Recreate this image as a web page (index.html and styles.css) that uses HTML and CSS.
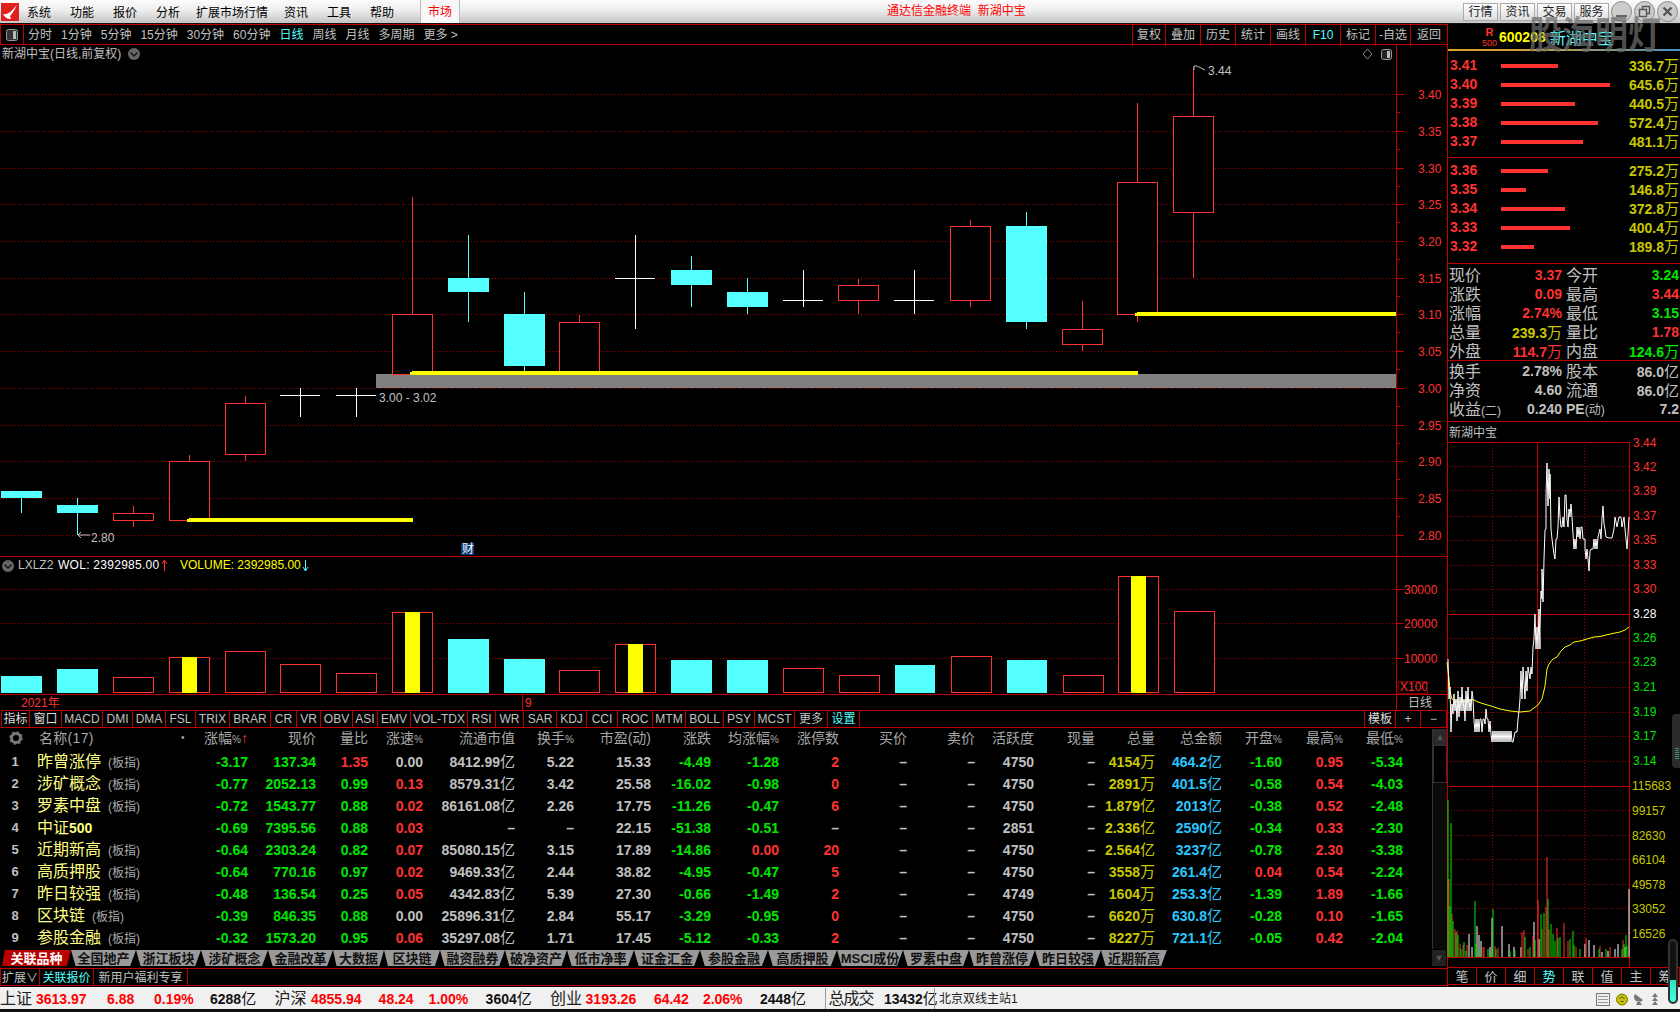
FILE: index.html
```html
<!DOCTYPE html>
<html lang="zh">
<head>
<meta charset="utf-8">
<title>通达信金融终端 新湖中宝</title>
<link rel="stylesheet" href="styles.css">
</head>
<body>
<div class="app">
  <header class="titlebar">
    <svg class="logo" viewBox="0 0 18 18"><rect width="18" height="18" fill="#e0201c"/><path d="M2 11 C6 12 9 10 16 2 C13 8 11 11 9 13 L10 16 C7 16 4 15 2 11Z" fill="#fff"/></svg>
    <nav class="menu">
      <span>系统</span><span>功能</span><span>报价</span><span>分析</span><span class="wide">扩展市场行情</span><span>资讯</span><span>工具</span><span>帮助</span>
    </nav>
    <span class="market">市场</span>
    <span class="apptitle">通达信金融终端&nbsp;&nbsp;新湖中宝</span>
    <div class="winbtns">
      <span class="wbtn">行情</span><span class="wbtn">资讯</span><span class="wbtn">交易</span><span class="wbtn">服务</span>
      <svg class="wround" viewBox="0 0 21 21"><circle cx="10.5" cy="10.5" r="10" fill="#ccc" stroke="#888"/><rect x="5" y="14" width="11" height="2" fill="#666"/></svg>
      <svg class="wround" viewBox="0 0 21 21"><circle cx="10.5" cy="10.5" r="10" fill="#ccc" stroke="#888"/><path d="M5.5 8.5H12.5V15.5H5.5ZM8.5 8V5.5H15.5V12.5H13" fill="none" stroke="#555" stroke-width="1.4"/></svg>
      <svg class="wround" viewBox="0 0 21 21"><circle cx="10.5" cy="10.5" r="10" fill="#ccc" stroke="#888"/><path d="M6.5 6.5L14.5 14.5M14.5 6.5L6.5 14.5" stroke="#555" stroke-width="2.4"/></svg>
    </div>
  </header>

  <main class="workspace">
    <section class="left">
      <div class="toolbar">
        <span class="panelbtn"><svg width="12" height="12" viewBox="0 0 12 12"><rect x=".5" y=".5" width="11" height="11" rx="2" fill="#333" stroke="#999"/><rect x="7" y="2" width="3" height="8" fill="#bbb"/></svg></span>
        <div class="periods">
          <span>分时</span><span>1分钟</span><span>5分钟</span><span>15分钟</span><span>30分钟</span><span>60分钟</span><span class="on">日线</span><span>周线</span><span>月线</span><span>多周期</span><span>更多 &gt;</span>
        </div>
        <div class="tools">
          <span>复权</span><span>叠加</span><span>历史</span><span>统计</span><span>画线</span><span class="on">F10</span><span>标记</span><span>-自选</span><span>返回</span>
        </div>
      </div>

      <svg class="chart" viewBox="0 45 1447 665" width="1447" height="665">
        <g class="grid">
          <path d="M0 94.5H1396M0 131.5H1396M0 168.5H1396M0 204.5H1396M0 241.5H1396M0 278.5H1396M0 314.5H1396M0 351.5H1396M0 388.5H1396M0 425.5H1396M0 461.5H1396M0 498.5H1396M0 535.5H1396"/>
          <path d="M0 589.5H1396M0 623.5H1396M0 658.5H1396"/>
        </g>
        <rect class="band" x="376" y="374" width="1020" height="14"/>

        <g class="wick-c">
          <path d="M21.5 498V513M77.5 498V535M468.5 235V322M524.5 292V371M691.5 256V307M747.5 278V314M1026.5 212V329"/>
        </g>
        <g class="wick-r">
          <path d="M133.5 506V527M189.5 455V462M245.5 396V461M412.5 197V315M579.5 315V323M858.5 279V314M970.5 220V307M1082.5 301V351M1137.5 103V322M1193.5 67V278"/>
        </g>
        <g class="cross">
          <path d="M280 395.5H320M300.5 388V417M336 395.5H376M356.5 388V417M615 278.5H655M635.5 235V329M783 300.5H823M803.5 270V307M894 300.5H934M914.5 270V314"/>
        </g>
        <g class="up">
          <rect x="113.5" y="513.5" width="40" height="7"/><rect x="169.5" y="461.5" width="40" height="59"/><rect x="225.5" y="403.5" width="40" height="51"/><rect x="392.5" y="314.5" width="40" height="60"/><rect x="559.5" y="322.5" width="40" height="50"/><rect x="838.5" y="285.5" width="40" height="15"/><rect x="950.5" y="226.5" width="40" height="74"/><rect x="1062.5" y="329.5" width="40" height="15"/><rect x="1117.5" y="182.5" width="40" height="132"/><rect x="1173.5" y="116.5" width="40" height="96"/>
        </g>
        <g class="down">
          <rect x="1" y="491" width="41" height="7"/><rect x="57" y="505" width="41" height="8"/><rect x="448" y="278" width="41" height="14"/><rect x="504" y="314" width="41" height="52"/><rect x="671" y="270" width="41" height="15"/><rect x="727" y="292" width="41" height="15"/><rect x="1006" y="226" width="41" height="96"/>
        </g>
        <g class="hl">
          <rect x="187" y="519" width="226" height="3"/><rect x="189" y="518" width="224" height="3"/><rect x="410" y="372" width="728" height="3"/><rect x="412" y="371" width="726" height="3"/><rect x="1135" y="313" width="261" height="3"/><rect x="1137" y="312" width="259" height="3"/>
        </g>
        <path class="note-line" d="M78 535H90M78 535L81 532M78 535L81 538M1194 70V66H1197L1205 70"/>
        <text class="t12 gray" x="2" y="58">新湖中宝(日线,前复权)</text>
        <circle class="chev" cx="134" cy="54" r="6"/><path class="chev-m" d="M130.5 52.5L134 56L137.5 52.5"/>
        <path class="diamond" d="M1367.5 49L1372 54L1367.5 59L1363 54Z"/>
        <rect class="btnic" x="1381.5" y="49.5" width="10" height="10" rx="2"/><rect class="btnic2" x="1387" y="51" width="3" height="7"/>
        <text class="t12 gray" x="1208" y="75">3.44</text>
        <text class="t12 gray" x="379" y="402">3.00 - 3.02</text>
        <text class="t12 gray" x="91" y="542">2.80</text>
        <rect class="cai" x="461" y="543" width="13" height="12"/><text class="t12 white" x="462" y="553">财</text>

        <g class="axis">
          <path d="M1396.5 45V710M0 556.5H1447M0 694.5H1447M522.5 694V710"/>
          <path d="M1396 94.5H1404M1396 131.5H1404M1396 168.5H1404M1396 204.5H1404M1396 241.5H1404M1396 278.5H1404M1396 314.5H1404M1396 351.5H1404M1396 388.5H1404M1396 425.5H1404M1396 461.5H1404M1396 498.5H1404M1396 535.5H1404M1396 112.5H1400M1396 149.5H1400M1396 186.5H1400M1396 222.5H1400M1396 259.5H1400M1396 296.5H1400M1396 332.5H1400M1396 369.5H1400M1396 406.5H1400M1396 443.5H1400M1396 479.5H1400M1396 516.5H1400M1396 589.5H1404M1396 623.5H1404M1396 658.5H1404"/>
        </g>
        <g class="ax-t">
          <text x="1418" y="99">3.40</text><text x="1418" y="136">3.35</text><text x="1418" y="173">3.30</text><text x="1418" y="209">3.25</text><text x="1418" y="246">3.20</text><text x="1418" y="283">3.15</text><text x="1418" y="319">3.10</text><text x="1418" y="356">3.05</text><text x="1418" y="393">3.00</text><text x="1418" y="430">2.95</text><text x="1418" y="466">2.90</text><text x="1418" y="503">2.85</text><text x="1418" y="540">2.80</text>
          <text x="1404" y="594">30000</text><text x="1404" y="628">20000</text><text x="1404" y="663">10000</text>
          <text x="1400" y="691">X100</text>
          <text x="21" y="707">2021年</text><text x="525" y="707">9</text>
        </g>
        <rect class="x100" x="1398.5" y="681.5" width="29" height="12"/>
        <text class="t12 gray" x="1408" y="707">日线</text>
        <circle class="chev" cx="8" cy="566" r="6"/><path class="chev-m" d="M4.5 564.5L8 568L11.5 564.5"/>
        <text class="t12 gray" x="18" y="569">LXLZ2</text>
        <text class="t12 white wol" x="58" y="569">WOL: 2392985.00</text>
        <path class="arr-r" d="M164.5 571V561M162 564L164.5 560L167 564"/>
        <text class="t12 yel" x="180" y="569">VOLUME: 2392985.00</text>
        <path class="arr-c" d="M305.5 560V570M303 567L305.5 571L308 567"/>

        <g class="up">
          <rect x="113.5" y="677.5" width="40" height="15"/><rect x="169.5" y="657.5" width="40" height="35"/><rect x="225.5" y="651.5" width="40" height="41"/><rect x="280.5" y="664.5" width="40" height="28"/><rect x="336.5" y="673.5" width="40" height="19"/><rect x="392.5" y="612.5" width="40" height="80"/><rect x="559.5" y="670.5" width="40" height="22"/><rect x="615.5" y="644.5" width="40" height="48"/><rect x="783.5" y="668.5" width="40" height="24"/><rect x="839.5" y="675.5" width="40" height="17"/><rect x="951.5" y="656.5" width="40" height="36"/><rect x="1063.5" y="675.5" width="40" height="17"/><rect x="1118.5" y="576.5" width="40" height="116"/><rect x="1174.5" y="611.5" width="40" height="81"/>
        </g>
        <g class="down">
          <rect x="1" y="676" width="41" height="17"/><rect x="57" y="669" width="41" height="24"/><rect x="448" y="639" width="41" height="54"/><rect x="504" y="659" width="41" height="34"/><rect x="671" y="660" width="41" height="33"/><rect x="727" y="660" width="41" height="33"/><rect x="895" y="665" width="40" height="28"/><rect x="1007" y="660" width="40" height="33"/>
        </g>
        <g class="hl">
          <rect x="182" y="657" width="15" height="36"/><rect x="405" y="612" width="15" height="81"/><rect x="628" y="644" width="15" height="49"/><rect x="1131" y="576" width="15" height="117"/>
        </g>
      </svg>

      <div class="indtabs">
        <span class="hi">指标</span><span class="hi">窗口</span><span>MACD</span><span>DMI</span><span>DMA</span><span>FSL</span><span>TRIX</span><span>BRAR</span><span>CR</span><span>VR</span><span>OBV</span><span>ASI</span><span>EMV</span><span>VOL-TDX</span><span>RSI</span><span>WR</span><span>SAR</span><span>KDJ</span><span>CCI</span><span>ROC</span><span>MTM</span><span>BOLL</span><span>PSY</span><span>MCST</span><span>更多</span><span class="on">设置</span><em></em><span class="hi">模板</span><span>+</span><span>−</span>
      </div>

      <div class="quotes">
        <div class="trow thead">
          <span class="idx"><svg width="14" height="14" viewBox="0 0 14 14"><circle cx="7" cy="7" r="4.5" fill="none" stroke="#777" stroke-width="3"/><circle cx="7" cy="7" r="6" fill="none" stroke="#777" stroke-width="1.6" stroke-dasharray="2.2 2.5"/></svg></span>
          <span class="nmh">名称(17)<u>•</u></span><span>涨幅<small>%</small><i class="sortup">↑</i></span><span>现价</span><span>量比</span><span>涨速<small>%</small></span><span>流通市值</span><span>换手<small>%</small></span><span>市盈(动)</span><span>涨跌</span><span>均涨幅<small>%</small></span><span>涨停数</span><span>买价</span><span>卖价</span><span>活跃度</span><span>现量</span><span>总量</span><span>总金额</span><span>开盘<small>%</small></span><span>最高<small>%</small></span><span>最低<small>%</small></span>
        </div>
        <div class="trow"><span class="idx">1</span><span class="nm">昨曾涨停<small>(板指)</small></span><b class="g">-3.17</b><b class="g">137.34</b><b class="r">1.35</b><b>0.00</b><b>8412.99<i>亿</i></b><b>5.22</b><b>15.33</b><b class="g">-4.49</b><b class="g">-1.28</b><b class="r">2</b><b>–</b><b>–</b><b>4750</b><b>–</b><b class="y">4154<i>万</i></b><b class="c">464.2<i>亿</i></b><b class="g">-1.60</b><b class="r">0.95</b><b class="g">-5.34</b></div>
        <div class="trow"><span class="idx">2</span><span class="nm">涉矿概念<small>(板指)</small></span><b class="g">-0.77</b><b class="g">2052.13</b><b class="g">0.99</b><b class="r">0.13</b><b>8579.31<i>亿</i></b><b>3.42</b><b>25.58</b><b class="g">-16.02</b><b class="g">-0.98</b><b class="r">0</b><b>–</b><b>–</b><b>4750</b><b>–</b><b class="y">2891<i>万</i></b><b class="c">401.5<i>亿</i></b><b class="g">-0.58</b><b class="r">0.54</b><b class="g">-4.03</b></div>
        <div class="trow"><span class="idx">3</span><span class="nm">罗素中盘<small>(板指)</small></span><b class="g">-0.72</b><b class="g">1543.77</b><b class="g">0.88</b><b class="r">0.02</b><b>86161.08<i>亿</i></b><b>2.26</b><b>17.75</b><b class="g">-11.26</b><b class="g">-0.47</b><b class="r">6</b><b>–</b><b>–</b><b>4750</b><b>–</b><b class="y">1.879<i>亿</i></b><b class="c">2013<i>亿</i></b><b class="g">-0.38</b><b class="r">0.52</b><b class="g">-2.48</b></div>
        <div class="trow"><span class="idx">4</span><span class="nm">中证<strong>500</strong></span><b class="g">-0.69</b><b class="g">7395.56</b><b class="g">0.88</b><b class="r">0.03</b><b>–</b><b>–</b><b>22.15</b><b class="g">-51.38</b><b class="g">-0.51</b><b>–</b><b>–</b><b>–</b><b>2851</b><b>–</b><b class="y">2.336<i>亿</i></b><b class="c">2590<i>亿</i></b><b class="g">-0.34</b><b class="r">0.33</b><b class="g">-2.30</b></div>
        <div class="trow"><span class="idx">5</span><span class="nm">近期新高<small>(板指)</small></span><b class="g">-0.64</b><b class="g">2303.24</b><b class="g">0.82</b><b class="r">0.07</b><b>85080.15<i>亿</i></b><b>3.15</b><b>17.89</b><b class="g">-14.86</b><b class="r">0.00</b><b class="r">20</b><b>–</b><b>–</b><b>4750</b><b>–</b><b class="y">2.564<i>亿</i></b><b class="c">3237<i>亿</i></b><b class="g">-0.78</b><b class="r">2.30</b><b class="g">-3.38</b></div>
        <div class="trow"><span class="idx">6</span><span class="nm">高质押股<small>(板指)</small></span><b class="g">-0.64</b><b class="g">770.16</b><b class="g">0.97</b><b class="r">0.02</b><b>9469.33<i>亿</i></b><b>2.44</b><b>38.82</b><b class="g">-4.95</b><b class="g">-0.47</b><b class="r">5</b><b>–</b><b>–</b><b>4750</b><b>–</b><b class="y">3558<i>万</i></b><b class="c">261.4<i>亿</i></b><b class="r">0.04</b><b class="r">0.54</b><b class="g">-2.24</b></div>
        <div class="trow"><span class="idx">7</span><span class="nm">昨日较强<small>(板指)</small></span><b class="g">-0.48</b><b class="g">136.54</b><b class="g">0.25</b><b class="r">0.05</b><b>4342.83<i>亿</i></b><b>5.39</b><b>27.30</b><b class="g">-0.66</b><b class="g">-1.49</b><b class="r">2</b><b>–</b><b>–</b><b>4749</b><b>–</b><b class="y">1604<i>万</i></b><b class="c">253.3<i>亿</i></b><b class="g">-1.39</b><b class="r">1.89</b><b class="g">-1.66</b></div>
        <div class="trow"><span class="idx">8</span><span class="nm">区块链<small>(板指)</small></span><b class="g">-0.39</b><b class="g">846.35</b><b class="g">0.88</b><b>0.00</b><b>25896.31<i>亿</i></b><b>2.84</b><b>55.17</b><b class="g">-3.29</b><b class="g">-0.95</b><b class="r">0</b><b>–</b><b>–</b><b>4750</b><b>–</b><b class="y">6620<i>万</i></b><b class="c">630.8<i>亿</i></b><b class="g">-0.28</b><b class="r">0.10</b><b class="g">-1.65</b></div>
        <div class="trow"><span class="idx">9</span><span class="nm">参股金融<small>(板指)</small></span><b class="g">-0.32</b><b class="g">1573.20</b><b class="g">0.95</b><b class="r">0.06</b><b>35297.08<i>亿</i></b><b>1.71</b><b>17.45</b><b class="g">-5.12</b><b class="g">-0.33</b><b class="r">2</b><b>–</b><b>–</b><b>4750</b><b>–</b><b class="y">8227<i>万</i></b><b class="c">721.1<i>亿</i></b><b class="g">-0.05</b><b class="r">0.42</b><b class="g">-2.04</b></div>
        <div class="vscroll"><span class="arrow">▲</span><span class="thumb"></span></div>
      </div>

      <div class="subtabs">
        <span class="act">关联品种</span><span>全国地产</span><span>浙江板块</span><span>涉矿概念</span><span>金融改革</span><span>大数据</span><span>区块链</span><span>融资融券</span><span>破净资产</span><span>低市净率</span><span>证金汇金</span><span>参股金融</span><span>高质押股</span><span>MSCI成份</span><span>罗素中盘</span><span>昨曾涨停</span><span>昨日较强</span><span>近期新高</span>
        <em class="more">▼</em>
      </div>

      <div class="exttabs">
        <span>扩展∨</span><span class="on">关联报价</span><span>新用户福利专享</span>
      </div>
    </section>

    <aside class="right">
      <div class="qhead">
        <span class="rbadge">R<small>500</small></span><b>600208</b><span class="sname">新湖中宝</span>
      </div>
      <div class="book asks">
        <div class="brow"><b>3.41</b><span class="bar"><s class="w57"></s></span><b class="vol">336.7<i>万</i></b></div>
        <div class="brow"><b>3.40</b><span class="bar"><s class="w109"></s></span><b class="vol">645.6<i>万</i></b></div>
        <div class="brow"><b>3.39</b><span class="bar"><s class="w74"></s></span><b class="vol">440.5<i>万</i></b></div>
        <div class="brow"><b>3.38</b><span class="bar"><s class="w97"></s></span><b class="vol">572.4<i>万</i></b></div>
        <div class="brow"><b>3.37</b><span class="bar"><s class="w82"></s></span><b class="vol">481.1<i>万</i></b></div>
      </div>
      <div class="book bids">
        <div class="brow"><b>3.36</b><span class="bar"><s class="w47"></s></span><b class="vol">275.2<i>万</i></b></div>
        <div class="brow"><b>3.35</b><span class="bar"><s class="w25"></s></span><b class="vol">146.8<i>万</i></b></div>
        <div class="brow"><b>3.34</b><span class="bar"><s class="w64"></s></span><b class="vol">372.8<i>万</i></b></div>
        <div class="brow"><b>3.33</b><span class="bar"><s class="w69"></s></span><b class="vol">400.4<i>万</i></b></div>
        <div class="brow"><b>3.32</b><span class="bar"><s class="w33"></s></span><b class="vol">189.8<i>万</i></b></div>
      </div>
      <div class="stats s1">
        <span>现价</span><b class="r">3.37</b><span>今开</span><b class="g">3.24</b>
        <span>涨跌</span><b class="r">0.09</b><span>最高</span><b class="r">3.44</b>
        <span>涨幅</span><b class="r">2.74%</b><span>最低</span><b class="g">3.15</b>
        <span>总量</span><b class="y">239.3<i>万</i></b><span>量比</span><b class="r">1.78</b>
        <span>外盘</span><b class="r">114.7<i>万</i></b><span>内盘</span><b class="g">124.6<i>万</i></b>
      </div>
      <div class="stats s2">
        <span>换手</span><b>2.78%</b><span>股本</span><b>86.0<i>亿</i></b>
        <span>净资</span><b>4.60</b><span>流通</span><b>86.0<i>亿</i></b>
        <span>收益<small>(二)</small></span><b>0.240</b><span class="pe">PE<small>(动)</small></span><b>7.2</b>
      </div>
      <div class="mini-title">新湖中宝</div>
      <svg class="mini" viewBox="1448 443 232 525" width="232" height="525">
        <g class="grid">
          <path d="M1448 467.5H1629M1448 491.5H1629M1448 517.5H1629M1448 541.5H1629M1448 566.5H1629M1448 590.5H1629M1448 639.5H1629M1448 663.5H1629M1448 688.5H1629M1448 713.5H1629M1448 737.5H1629M1448 762.5H1629M1448 811.5H1629M1448 836.5H1629M1448 860.5H1629M1448 885.5H1629M1448 909.5H1629M1448 934.5H1629M1492.5 443V958M1584.5 443V958"/>
        </g>
        <g class="axis">
          <path d="M1448 443.5H1630M1448 615.5H1630M1448 787.5H1630M1448 958.5H1630M1629.5 443V968M1537.5 443V958"/>
        </g>
        <path class="vb-w" d="M1469 958V935M1472 958V948M1477 958V927M1479 958V936M1481 958V942M1490 958V948M1492 958V919M1502 958V927M1509 958V945M1514 958V948M1521 958V948M1534 958V923M1539 958V940M1585 958V945M1589 958V941M1594 958V946M1602 958V953M1608 958V952M1615 958V950M1618 958V945M1625 958V948M1629 958V890"/>
        <path class="vb-r" d="M1448 958V880M1449 958V880M1452 958V915M1455 958V930M1457 958V932M1460 958V945M1463 958V946M1467 958V946M1483 958V948M1484 958V948M1495 958V947M1498 958V949M1522 958V933M1524 958V931M1528 958V950M1533 958V937M1538 958V901M1542 958V930M1546 958V908M1547 958V858M1549 958V930M1557 958V929M1564 958V924M1568 958V942M1576 958V948M1586 958V939M1600 958V947M1610 958V948M1623 958V941"/>
        <path class="vb-g" d="M1448 958V801M1450 958V907M1451 958V824M1453 958V922M1456 958V934M1458 958V936M1461 958V950M1464 958V943M1466 958V952M1475 958V902M1476 958V945M1480 958V950M1488 958V950M1490 958V955M1493 958V910M1496 958V950M1510 958V952M1515 958V951M1525 958V938M1530 958V948M1535 958V941M1541 958V915M1544 958V914M1548 958V900M1551 958V925M1553 958V935M1555 958V942M1558 958V939M1560 958V938M1570 958V940M1574 958V946M1580 958V950M1573 958V932M1599 958V950M1606 958V950M1622 958V950M1624 958V945M1626 958V936M1627 958V947"/>
        <polyline class="avg" points="1447,663 1449,680 1450,693 1452,700 1456,702 1462,703 1473,700.5 1478,703 1484,705 1491,707 1500,710 1510,712 1520,713 1530,712 1538,706 1542,700 1545,687 1547,670 1549,665 1553,660 1557,658 1561,652 1565,648 1570,646 1574,643 1580,642 1587,640 1594,638 1600,637.5 1606,636 1615,634 1620,633 1625,631 1629,628"/>
        <polyline class="price" points="1448,660 1449,700 1450,688 1451,733 1452,705 1453,715 1454,695 1455,712 1456,700 1457,722 1458,692 1459,718 1460,698 1461,712 1462,688 1463,712 1464,700 1465,722 1466,692 1467,712 1468,688 1469,712 1470,700 1471,712 1472,692 1473,700 1474,722 1475,733 1476,720 1477,733 1478,720 1479,733 1480,720 1481,720 1482,733 1483,720 1484,720 1485,725 1486,710 1487,720 1488,720 1489,733 1490,722 1491,735 1492,743 1493,732 1494,743 1495,732 1496,743 1497,732 1498,743 1499,732 1500,743 1501,732 1502,743 1503,732 1504,743 1505,732 1506,743 1507,732 1508,743 1509,732 1510,743 1511,732 1512,743 1513,743 1515,733 1517,733 1518,720 1519,712 1520,700 1521,672 1522,700 1523,668 1525,700 1526,672 1527,692 1528,668 1530,680 1531,668 1532,675 1533,648 1534,640 1535,615 1536,650 1537,628 1538,650 1539,610 1540,650 1540,630 1541,592 1542,600 1542,570 1543,603 1544,560 1545,531 1546,530 1546,496 1547,464 1548,507 1549,470 1550,500 1550,475 1551,530 1552,540 1553,548 1554,555 1555,560 1556,540 1557,540 1558,528 1559,498 1560,518 1561,528 1562,528 1563,518 1564,528 1565,496 1566,496 1567,520 1568,528 1569,510 1570,518 1571,505 1572,518 1573,535 1574,550 1575,540 1576,550 1577,528 1578,538 1579,528 1580,540 1581,528 1582,528 1583,540 1585,540 1585,550 1586,560 1587,550 1588,560 1589,572 1590,552 1591,550 1593,550 1594,540 1595,550 1596,540 1597,550 1598,538 1600,530 1601,540 1602,520 1603,507 1604,525 1605,530 1606,538 1609,539 1612,539 1614,530 1615,518 1617,528 1619,518 1621,518 1622,528 1624,518 1625,530 1626,540 1627,550 1628,535 1629,518"/>
        <g class="m-r"><text x="1633" y="448">3.44</text><text x="1633" y="472">3.42</text><text x="1633" y="496">3.39</text><text x="1633" y="521">3.37</text><text x="1633" y="545">3.35</text><text x="1633" y="570">3.33</text><text x="1633" y="594">3.30</text></g>
        <text class="m-w" x="1633" y="619">3.28</text>
        <g class="m-g"><text x="1633" y="643">3.26</text><text x="1633" y="667">3.23</text><text x="1633" y="692">3.21</text><text x="1633" y="717">3.19</text><text x="1633" y="741">3.17</text><text x="1633" y="766">3.14</text></g>
        <g class="m-y"><text x="1632" y="791">115683</text><text x="1632" y="816">99157</text><text x="1632" y="841">82630</text><text x="1632" y="865">66104</text><text x="1632" y="890">49578</text><text x="1632" y="914">33052</text><text x="1632" y="939">16526</text></g>
      </svg>
      <div class="sidetabs">
        <span>笔</span><span>价</span><span>细</span><span class="on">势</span><span>联</span><span>值</span><span>主</span><span>筹</span>
      </div>
    </aside>
  </main>

  <footer class="status">
    <span class="lbl">上证</span><b>3613.97</b><b>6.88</b><b>0.19%</b><b class="k">6288<i>亿</i></b>
    <span class="lbl">沪深</span><b>4855.94</b><b>48.24</b><b>1.00%</b><b class="k">3604<i>亿</i></b>
    <span class="lbl">创业</span><b>3193.26</b><b>64.42</b><b>2.06%</b><b class="k">2448<i>亿</i></b>
    <span class="lbl div">总成交</span><b class="k">13432<i>亿</i></b>
    <span class="site">北京双线主站1</span>
    <div class="tray">
      <svg width="14" height="13" viewBox="0 0 14 13"><rect x=".5" y=".5" width="13" height="12" fill="#eee" stroke="#777"/><path d="M2 3.5H12M2 6.5H12M2 9.5H12" stroke="#999"/></svg>
      <svg width="12" height="13" viewBox="0 0 12 13"><circle cx="6" cy="6.5" r="5.5" fill="#c8c000" stroke="#807800"/><path d="M3.5 6L6 3.5L8.5 6M4.5 8.5H7.5" fill="none" stroke="#444"/></svg>
      <svg width="10" height="13" viewBox="0 0 10 13"><path d="M1 1L9 7A5 5 0 0 1 1 1ZM4 8L2 12H8L6 9" fill="#777"/></svg>
      <svg width="10" height="13" viewBox="0 0 10 13"><path d="M5 0L8 4H2ZM5 4L8 8H2ZM5 8L8 12H2Z" fill="#777"/></svg>
    </div>
  </footer>
  <div class="strip"></div>

  <div class="watermark">股海明灯</div>
  <div class="handle"><span></span></div>
  <div class="pill"><span></span></div>
</div>
</body>
</html>
```

FILE: styles.css
```css
* { box-sizing: border-box; }
html, body { margin: 0; height: 100%; background: #000; overflow: hidden; }
body { font-family: "Liberation Sans", "Noto Sans CJK SC", sans-serif; font-size: 12px; color: #c0c0c0; }
i { font-style: normal; }
.app { position: relative; width: 1680px; height: 1012px; display: flex; flex-direction: column; background: #000; }

/* title bar */
.titlebar { height: 24px; flex: none; display: flex; align-items: center; position: relative; color: #000;
  background: linear-gradient(#fbfbfb 0, #f0f0f0 40%, #c8c8c8 95%); border-bottom: 1px solid #111; }
.logo { width: 18px; height: 18px; margin-left: 1px; flex: none; }
.menu { display: flex; gap: 19px; margin-left: 8px; }
.menu .wide { margin: 0 -3px; }
.market { margin-left: 26px; width: 40px; height: 23px; line-height: 25px; text-align: center; color: #f00; border-left: 1px solid #bbb; border-right: 1px solid #bbb; background: #f8f8f8; }
.apptitle { position: absolute; left: 887px; top: 3px; color: #f00; font-size: 12px; line-height: 16px; }
.winbtns { margin-left: auto; display: flex; align-items: center; gap: 2px; padding-right: 2px; }
.wbtn { width: 35px; height: 18px; line-height: 16px; text-align: center; border: 1px solid #aaa; background: linear-gradient(#fff, #ddd); color: #222; }
.wround { width: 21px; height: 21px; flex: none; }

/* layout */
.workspace { flex: none; height: 963px; display: flex; }
.left { width: 1448px; flex: none; display: flex; flex-direction: column; border-right: 1px solid #c00000; }
.right { width: 232px; flex: none; display: flex; flex-direction: column; }

/* toolbar */
.toolbar { height: 21px; flex: none; display: flex; border-top: 1px solid #c00000; border-bottom: 1px solid #c00000; line-height: 21px; }
.panelbtn { width: 24px; display: flex; align-items: center; justify-content: center; border-left: 1px solid #c00000; border-right: 1px solid #c00000; }
.periods { display: flex; gap: 9px; padding-left: 4px; }
.periods .on, .tools .on, .indtabs .on, .exttabs .on, .sidetabs .on { color: #54ffff; }
.tools { margin-left: auto; display: grid; grid-template-columns: 33px repeat(7, 35px) 37px; }
.tools span { text-align: center; border-left: 1px solid #c00000; }

.chart { display: block; flex: none; }
.chart text, .mini text { font-family: "Liberation Sans", "Noto Sans CJK SC", sans-serif; font-size: 12px; }
.grid path { fill: none; stroke: #a80000; stroke-dasharray: 1 2; }
.band { fill: #808080; }
.wick-c path { fill: none; stroke: #54ffff; }
.wick-r path { fill: none; stroke: #ff3232; }
.cross path { fill: none; stroke: #fff; }
.up rect { fill: #000; stroke: #ff3232; }
.down rect { fill: #54ffff; }
.hl rect { fill: #ff0; }
.note-line { fill: none; stroke: #c0c0c0; }
.gray { fill: #c0c0c0; }
.white { fill: #fff; }
.yel { fill: #ff0; }
.wol { letter-spacing: .27px; }
.chev { fill: #666; }
.chev-m { fill: none; stroke: #111; stroke-width: 1.3; }
.diamond { fill: none; stroke: #888; }
.btnic { fill: #222; stroke: #999; }
.btnic2 { fill: #bbb; }
.cai { fill: #0a3a78; }
.axis path { fill: none; stroke: #c00000; }
.ax-t text { fill: #ff3232; }
.x100 { fill: none; stroke: #800000; }
.arr-r { fill: none; stroke: #ff3232; }
.arr-c { fill: none; stroke: #54ffff; }

/* indicator tabs */
.indtabs { height: 18px; flex: none; display: grid; line-height: 16px; border-top: 1px solid #c00000; border-bottom: 1px solid #c00000; margin-left: 1px;
  grid-template-columns: 29px 32px 41px 30px 33px 30px 34px 41px 26px 24px 32px 25px 33px 57px 28px 28px 33px 30px 31px 35px 33px 38px 31px 40px 33px 32px 1fr 31px 25px 26px; }
.indtabs span { text-align: center; border-right: 1px solid #c00000; overflow: hidden; white-space: nowrap; }
.indtabs span:first-child { border-left: 1px solid #c00000; }
.indtabs .hi { color: #ddd; }
.indtabs em { border-right: 1px solid #c00000; }

/* quote table */
.quotes { position: relative; height: 222px; flex: none; }
.trow { display: grid; height: 22px; line-height: 22px; white-space: nowrap; width: 1404px;
  grid-template-columns: 30px 160px 58px 68px 52px 55px 92px 59px 77px 60px 68px 60px 68px 68px 59px 61px 60px 67px 60px 61px 60px; }
.trow > b, .thead > span { text-align: right; font-size: 14px; font-weight: 700; color: #c0c0c0; }
.trow > b i { font-weight: 400; font-size: 15px; }
.thead { height: 23px; line-height: 20px; }
.thead > span { font-weight: 400; color: #a8a8a8; }
.thead small { font-size: 10px; }
.thead > .nmh { text-align: left; padding-left: 9px; position: relative; letter-spacing: .3px; }
.nmh u { position: absolute; left: 151px; top: 0; text-decoration: none; font-size: 10px; }
.thead > .idx { text-align: center; display: flex; align-items: center; justify-content: center; padding-left: 2px; height: 20px; }
.sortup { color: #ff3232; }
.idx { text-align: center; font-size: 13px; font-weight: 700; color: #c0c0c0; }
.nm { font-size: 16px; color: #ffff80; padding-left: 7px; display: flex; align-items: baseline; }
.nm small { font-size: 12px; color: #aaa; margin-left: 7px; }
.nm strong { font-size: 14px; }
.trow > b.g { color: #00e600; }
.trow > b.r { color: #ff3232; }
.trow > b.y { color: #c8c800; }
.trow > b.c { color: #28c8ff; }
.vscroll { position: absolute; right: 0; top: 1px; width: 15px; height: 220px; border-left: 1px solid #333; display: flex; flex-direction: column; background: #0a0a0a; }
.vscroll .arrow { height: 16px; line-height: 16px; text-align: center; font-size: 9px; color: #555; background: #2a2a2a; }
.vscroll .thumb { height: 38px; background: #000; border: 1px solid #333; }

/* sub tabs */
.subtabs { height: 18px; flex: none; display: grid; position: relative; padding-left: 2px;
  grid-template-columns: 69px 65px 65px 67px 65px 51px 56px 65px 62px 67px 66px 68px 69px 66px 66px 66px 66px 66px; }
.subtabs span { height: 16px; line-height: 18px; text-align: center; background: #999; color: #111; font-size: 13px; font-weight: 700; white-space: nowrap;
  clip-path: polygon(0 0, 100% 0, 91% 100%, 7% 100%); }
.subtabs .act { background: #b80000; color: #fff; font-weight: 700; clip-path: polygon(4% 0, 100% 0, 94% 100%, 0 100%); }
.more { position: absolute; right: 1px; top: 0; width: 14px; height: 16px; font-style: normal; font-size: 9px; line-height: 16px; text-align: center; color: #555; background: #222; }

.exttabs { height: 18px; flex: none; display: grid; grid-template-columns: 40px 54px 94px; line-height: 18px; border-top: 1px solid #c00000; border-bottom: 1px solid #c00000; }
.exttabs span { text-align: center; border-right: 1px solid #c00000; white-space: nowrap; height: 16px; }
.exttabs span:first-child { border-left: 1px solid #c00000; }

/* right panel */
.qhead { height: 27px; flex: none; display: flex; align-items: center; padding-left: 34px; border-bottom: 2px solid; border-image: linear-gradient(90deg, #e0a030, #c8a040 40%, #4090d0) 1; }
.rbadge { display: flex; flex-direction: column; color: #ff3232; width: 15px; text-align: center; line-height: 11px; font-weight: 700; font-size: 11px; align-items: center; margin-top: 2px; }
.rbadge small { font-weight: 400; font-size: 9px; line-height: 10px; }
.qhead b { font-size: 14px; color: #ff0; margin-left: 2px; }
.sname { color: #54ffff; font-size: 16px; margin-left: 4px; }
.book { flex: none; border-bottom: 1px solid #c00000; padding: 5px 1px 6px 2px; }
.bids { padding-top: 3px; padding-bottom: 7px; }
.brow { height: 19px; line-height: 19px; display: flex; align-items: center; }
.brow > b { font-size: 14px; color: #ff3232; width: 51px; flex: none; }
.bar { flex: 1; height: 4px; display: block; }
.bar s { display: block; height: 4px; background: #ff3232; }
.w25 { width: 25px; } .w33 { width: 33px; } .w47 { width: 47px; } .w57 { width: 57px; } .w64 { width: 64px; } .w69 { width: 69px; } .w74 { width: 74px; } .w82 { width: 82px; } .w97 { width: 97px; } .w109 { width: 109px; }
.brow .vol { width: auto; color: #c8c800; margin-left: auto; }
.vol i, .stats i { font-weight: 400; font-size: 15px; }
.stats { flex: none; display: grid; grid-template-columns: 33px 80px 36px 81px; grid-auto-rows: 19px; line-height: 21px; padding-left: 1px; border-bottom: 1px solid #c00000; white-space: nowrap; }
.stats.s1 { padding-top: 1px; }
.stats.s2 { grid-template-columns: 52px 61px 44px 73px; padding-bottom: 3px; }
.stats span { font-size: 16px; color: #c0c0c0; }
.stats span:nth-child(4n+3) { padding-left: 4px; }
.stats b { text-align: right; font-size: 14px; color: #c0c0c0; }
.stats small { font-size: 12px; }
.stats .pe { font-weight: 700; font-size: 14px; }
.stats .pe small { font-weight: 400; }
.stats b.r { color: #ff3232; }
.stats b.g { color: #00e600; }
.stats b.y { color: #c8c800; }
.mini-title { height: 20px; line-height: 23px; flex: none; padding-left: 1px; color: #c0c0c0; }
.mini { display: block; flex: none; overflow: visible; }
.price { fill: none; stroke: #fff; stroke-width: 1; }
.avg { fill: none; stroke: #ff0; stroke-width: 1; }
.vb-w { stroke: #fff; fill: none; } .vb-r { stroke: #ff3232; fill: none; } .vb-g { stroke: #00e600; fill: none; }
.m-r text { fill: #ff3232; }
.m-w { fill: #fff; }
.m-g text { fill: #00e600; }
.m-y text { fill: #c8c800; }
.sidetabs { height: 18px; flex: none; display: grid; grid-template-columns: repeat(8, 29px); border-top: 1px solid #c00000; border-bottom: 1px solid #c00000; line-height: 18px; font-size: 13px; }
.sidetabs span { text-align: center; border-right: 1px solid #c00000; height: 16px; }

/* status bar */
.status { height: 22px; flex: none; display: grid; align-items: center; background: #f0f0f0; white-space: nowrap; line-height: 22px; padding-top: 1px;
  grid-template-columns: 36px 71px 47px 56px 64.5px 36.5px 67.6px 50px 57px 64.3px 35.7px 68.3px 49px 57px 65.5px 58.5px 50px 1fr auto; }
.status b { color: #f00; font-size: 14px; }
.status b.k { color: #111; }
.status i { font-weight: 400; font-size: 15px; }
.status .lbl { color: #222; font-size: 16px; font-weight: 400; }
.status .div { border-left: 1px solid #999; padding-left: 2px; letter-spacing: -1px; }
.site { color: #222; border-left: 1px solid #999; padding-left: 4px; font-size: 12px; }
.tray { display: flex; align-items: center; gap: 6px; padding-right: 20px; }
.strip { flex: 1; background: #111; }

/* overlays */
.watermark { position: absolute; left: 1529px; top: 13px; font-size: 33px; font-weight: 700; line-height: 38px; color: rgba(110,110,110,.72); white-space: nowrap; pointer-events: none; transform: scaleY(1.15); transform-origin: top left; }
.handle { position: absolute; left: 1672px; top: 714px; width: 8px; height: 54px; background: #2c2c2c; border-radius: 4px 0 0 4px; display: flex; align-items: flex-end; justify-content: flex-end; padding: 8px 1px; }
.handle span { width: 4px; height: 12px; background: repeating-linear-gradient(#3a8a80 0 1px, transparent 1px 2px); }
.pill { position: absolute; left: 1668px; top: 939px; width: 10px; height: 65px; border: 2px solid #333; border-radius: 5px; background: #111; display: flex; align-items: flex-end; }
.pill span { display: block; width: 100%; height: 22px; border-radius: 0 0 3px 3px; background: linear-gradient(#30e0c0, #40ffe0); }
```
